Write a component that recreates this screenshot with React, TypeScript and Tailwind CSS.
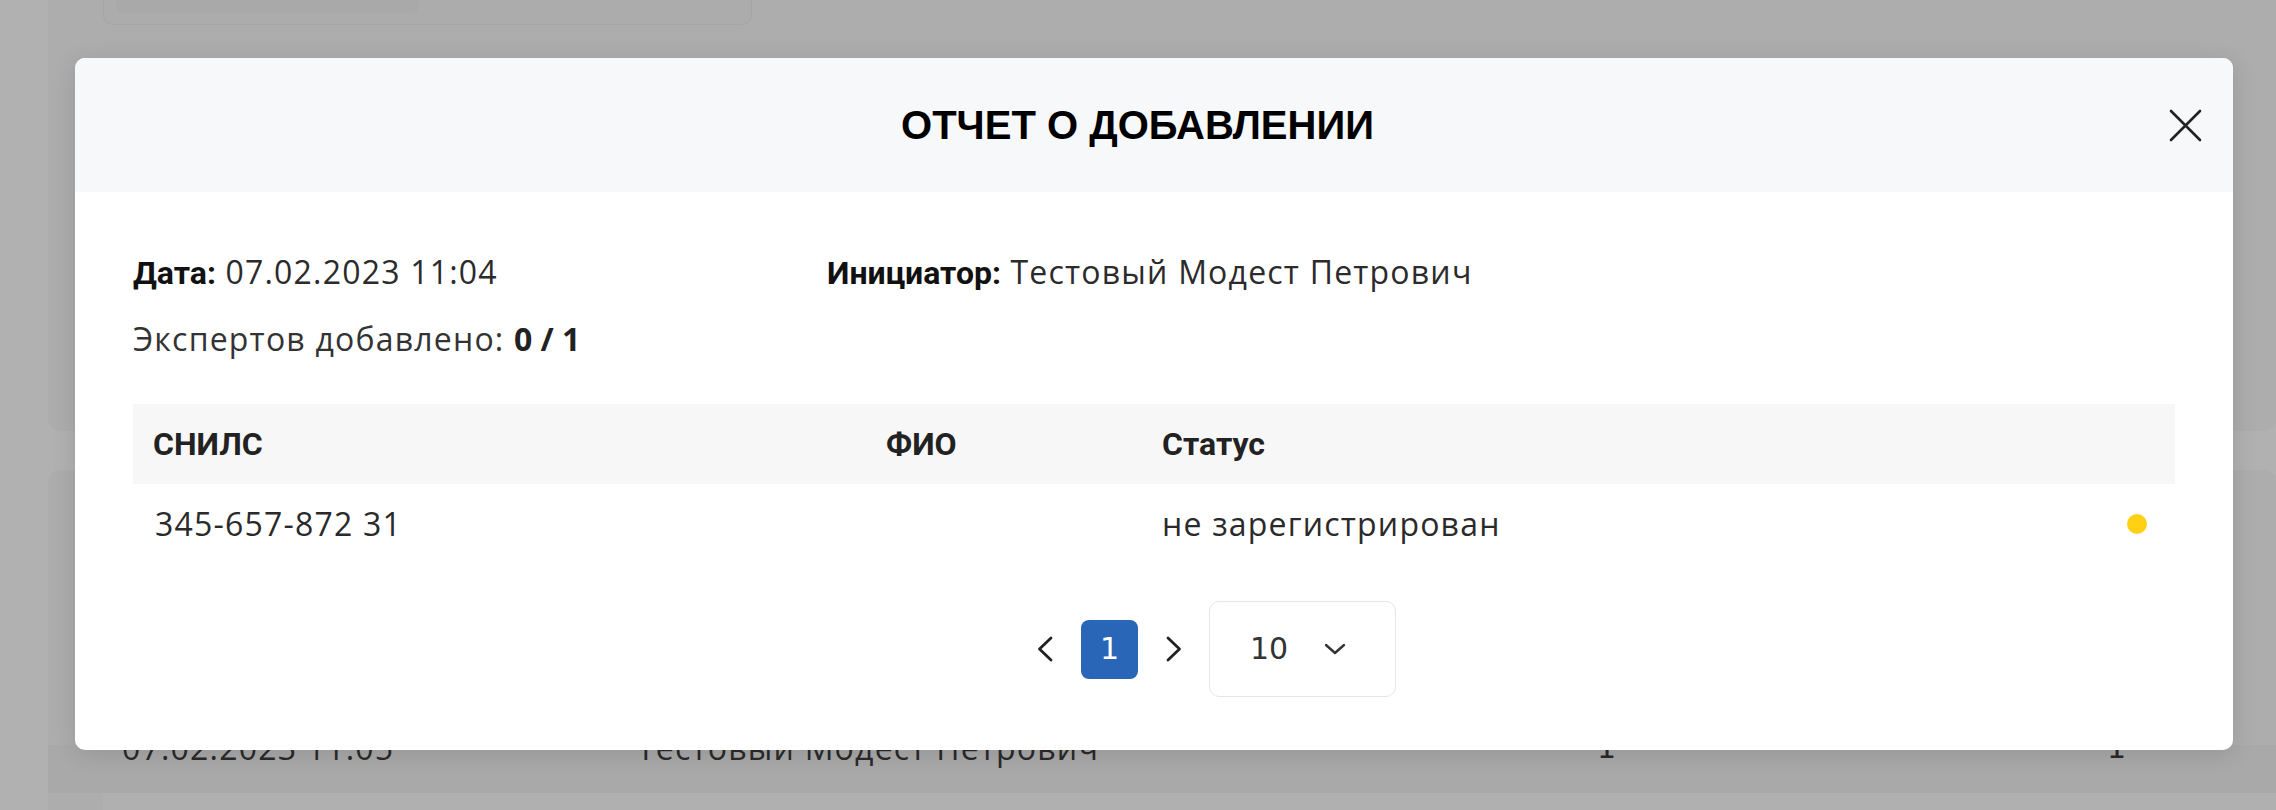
const columns = "grid grid-cols-[733px_276px_1fr] items-center";
const label = "font-['Roboto',sans-serif] font-bold tracking-normal text-[#111]";

function CloseIcon() {
  return (
    <svg width="33" height="33" viewBox="0 0 33 33" fill="none" stroke="#222" strokeWidth="2.6" strokeLinecap="round">
      <path d="M2 2L31 31M31 2L2 31" />
    </svg>
  );
}

function Chevron({ dir }: { dir: "left" | "right" }) {
  return (
    <svg width="16" height="26" viewBox="0 0 16 26" fill="none" stroke="#222" strokeWidth="2.8" strokeLinecap="round" strokeLinejoin="round">
      <path d={dir === "left" ? "M14 2L2.5 13L14 24" : "M2 2L13.5 13L2 24"} />
    </svg>
  );
}

function ChevronDown() {
  return (
    <svg width="22" height="12" viewBox="0 0 22 12" fill="none" stroke="#333" strokeWidth="2.4" strokeLinecap="round" strokeLinejoin="round">
      <path d="M2 2L11 10L20 2" />
    </svg>
  );
}

function Background() {
  return (
    <div className="flex flex-col pl-[48px]">
      <div className="h-[431px] rounded-b-[12px] bg-[#adadad] pl-[55px]">
        <div className="h-[25px] w-[649px] rounded-b-[10px] border border-t-0 border-[#a6a6a6] bg-[#acacac] pl-[12px]">
          <div className="h-[13px] w-[303px] rounded-b-[8px] bg-[#a9a9a9]" />
        </div>
      </div>
      <div className="mt-[39px] h-[400px] rounded-t-[12px] bg-[#adadad]">
        <div className="h-[275px]" />
        <div className="grid h-[48px] grid-cols-[515px_960px_510px_1fr] bg-[#a9a9a9] pl-[74px] text-[32px] leading-[44px] tracking-[1.2px] text-[#2a2a2a]">
          <div className="-mt-[19px]">07.02.2023 11:05</div>
          <div className="-mt-[19px]">Тестовый Модест Петрович</div>
          <div className="-mt-[19px] font-['DejaVu_Sans',sans-serif] text-[30px]">1</div>
          <div className="-mt-[19px] font-['DejaVu_Sans',sans-serif] text-[30px]">1</div>
        </div>
        <div className="ml-[55px] h-[60px] bg-[#b0b0b0]" />
      </div>
    </div>
  );
}

export default function App() {
  return (
    <div className="relative h-[810px] w-[2276px] overflow-hidden bg-[#b1b1b1] font-['Open_Sans',sans-serif]">
      <Background />

      <div className="absolute inset-0 pl-[75px] pt-[58px]">
        <div className="flex h-[692px] w-[2158px] flex-col overflow-hidden rounded-[10px] bg-white shadow-[0_4px_24px_rgba(0,0,0,0.12)]">
          <div className="flex h-[134px] shrink-0 items-center bg-[#f7f8fa] px-[31px]">
            <div className="flex-1 text-center font-['Liberation_Sans',Arial,sans-serif] text-[40px] font-bold leading-none text-black">
              ОТЧЕТ О ДОБАВЛЕНИИ
            </div>
            <button className="flex h-[33px] w-[33px] items-center justify-center">
              <CloseIcon />
            </button>
          </div>

          <div className="flex flex-col px-[58px] pt-[58px] text-[32px] leading-[44px] tracking-[1.2px] text-[#2b2b2b]">
            <div className="flex">
              <div className="w-[694px]">
                <span className={label}>Дата:</span> 07.02.2023 11:04
              </div>
              <div>
                <span className={label}>Инициатор:</span> Тестовый Модест Петрович
              </div>
            </div>
            <div className="mt-[22px] text-[#333]">
              Экспертов добавлено: <span className="font-bold tracking-normal text-[#222]">0 / 1</span>
            </div>

            <div className={`${columns} mt-[43px] h-[80px] bg-[#f7f7f7] font-['Roboto',sans-serif] font-bold tracking-normal text-[#222]`}>
              <div className="px-[20px]">СНИЛС</div>
              <div className="px-[20px]">ФИО</div>
              <div className="px-[20px]">Статус</div>
            </div>
            <div className={`${columns} h-[80px] text-[#2a2a2a]`}>
              <div className="px-[22px]">345-657-872 31</div>
              <div className="px-[20px]" />
              <div className="flex items-center justify-between pl-[20px] pr-[28px]">
                <span>не зарегистрирован</span>
                <span className="h-[20px] w-[20px] rounded-full bg-[#ffd014]" />
              </div>
            </div>

            <div className="mt-[37px] flex items-center pl-[904px] font-['DejaVu_Sans',sans-serif] tracking-normal">
              <button className="flex items-center">
                <Chevron dir="left" />
              </button>
              <button className="ml-[28px] flex h-[59px] w-[57px] items-center justify-center rounded-[8px] bg-[#2a66b7] text-[30px] leading-none text-white">
                1
              </button>
              <button className="ml-[28px] flex items-center">
                <Chevron dir="right" />
              </button>
              <div className="ml-[27px] flex h-[96px] w-[187px] items-center justify-between rounded-[10px] border border-[#e3e6ec] pl-[40px] pr-[49px] text-[30px] leading-none text-[#333]">
                <span>10</span>
                <ChevronDown />
              </div>
            </div>
          </div>
        </div>
      </div>
    </div>
  );
}
